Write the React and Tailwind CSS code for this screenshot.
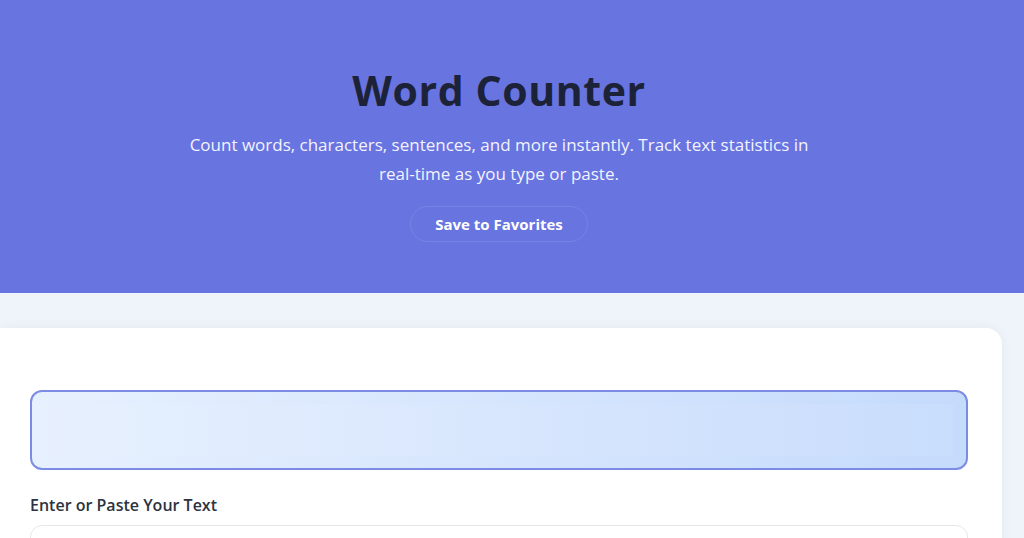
import React, { useState } from 'react';

export default function App() {
  const [text, setText] = useState('');

  return (
    <div className="min-h-screen bg-[#eff4fb] overflow-hidden" style={{ fontFamily: '"Open Sans", "Noto Sans", sans-serif' }}>
      <header className="bg-[#6874df] h-[293px]">
        <div className="w-[998px] flex flex-col items-center pt-[62px]">
          <h1 className="text-[41px] leading-[56px] font-bold text-[#1c2238] tracking-[0.6px]">Word Counter</h1>
          <p className="mt-[12px] w-[632px] text-center text-[17px] leading-[29px] text-[#f3f3ff]">
            Count words, characters, sentences, and more instantly. Track text statistics in real-time as you type or paste.
          </p>
          <button className="mt-[18px] h-[36px] px-[24px] rounded-full border border-white/10 text-white text-[15px] font-bold">
            Save to Favorites
          </button>
        </div>
      </header>

      <main className="pt-[35px]">
        <div className="w-[1002px] bg-white rounded-tr-[16px] shadow-[0_0_12px_rgba(0,0,0,0.05)] pl-[30px] pr-[34px] pt-[62px] pb-10 min-h-[300px]">
          <div className="h-[80px] rounded-[12px] border-2 border-[#7c8ce4] bg-gradient-to-r from-[#e7f0fe] to-[#c5dbfc] p-[12px]">
            <div className="h-full bg-white/[0.06] rounded-[2px]" />
          </div>
          <label className="block mt-[23px] text-[16px] font-semibold text-[#2d3340]">Enter or Paste Your Text</label>
          <textarea
            value={text}
            onChange={(e) => setText(e.target.value)}
            className="mt-[8px] w-full h-[200px] rounded-[12px] border border-[#e5e7eb] resize-none outline-none"
          />
        </div>
      </main>
    </div>
  );
}
